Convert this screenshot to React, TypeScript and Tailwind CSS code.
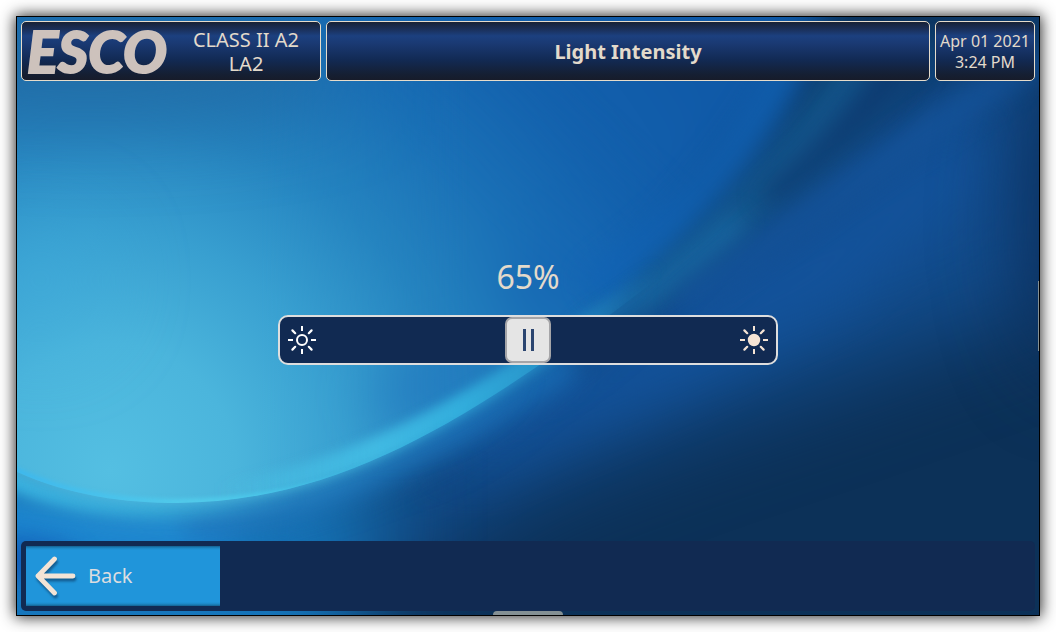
import { useState } from "react";

const panel =
  "rounded-[5px] border border-[#e6dccb] bg-[linear-gradient(180deg,#182236_0%,#1a2f58_12%,#1c407f_24%,#1a3a74_36%,#122a54_65%,#151f33_90%,#171c2a_100%)]";

const blurs = [
  { id: "blur45", amount: 45 },
  { id: "blur26", amount: 26 },
  { id: "blur12", amount: 12 },
  { id: "blur6", amount: 6 },
  { id: "blur2", amount: 2 },
];

function Wallpaper() {
  return (
    <svg
      className="absolute inset-0 -z-10 h-full w-full"
      viewBox="17 17 1022 598"
      preserveAspectRatio="none"
      aria-hidden="true"
    >
      <defs>
        {blurs.map((b) => (
          <filter
            key={b.id}
            id={b.id}
            filterUnits="userSpaceOnUse"
            x="-200"
            y="-200"
            width="1500"
            height="1100"
            colorInterpolationFilters="sRGB"
          >
            <feGaussianBlur stdDeviation={b.amount} />
          </filter>
        ))}
        <radialGradient id="upper" gradientUnits="userSpaceOnUse" cx="110" cy="470" r="700">
          <stop offset="0" stopColor="#54bfe2" />
          <stop offset="0.18" stopColor="#4bb5dc" />
          <stop offset="0.34" stopColor="#389fd0" />
          <stop offset="0.5" stopColor="#2584c0" />
          <stop offset="0.66" stopColor="#1a70b6" />
          <stop offset="0.82" stopColor="#1361ad" />
          <stop offset="1" stopColor="#105aa8" />
        </radialGradient>
        <linearGradient id="rim" gradientUnits="userSpaceOnUse" x1="17" y1="0" x2="720" y2="0">
          <stop offset="0" stopColor="#3cb8ee" />
          <stop offset="0.25" stopColor="#52cdec" />
          <stop offset="0.5" stopColor="#3cc0e8" />
          <stop offset="0.68" stopColor="#2ba0d4" />
          <stop offset="0.85" stopColor="#2080b8" stopOpacity="0.8" />
          <stop offset="1" stopColor="#1a6aa8" stopOpacity="0" />
        </linearGradient>
        <linearGradient id="rimWide" gradientUnits="userSpaceOnUse" x1="220" y1="0" x2="660" y2="0">
          <stop offset="0" stopColor="#4cc8ea" stopOpacity="0" />
          <stop offset="0.35" stopColor="#45c2e8" stopOpacity="0.7" />
          <stop offset="0.55" stopColor="#33b0de" stopOpacity="0.9" />
          <stop offset="0.75" stopColor="#2894ca" stopOpacity="0.9" />
          <stop offset="1" stopColor="#1a6fae" stopOpacity="0" />
        </linearGradient>
        <linearGradient id="underGlow" gradientUnits="userSpaceOnUse" x1="17" y1="0" x2="300" y2="0">
          <stop offset="0" stopColor="#30b0e2" />
          <stop offset="0.5" stopColor="#2ba5d6" stopOpacity="0.8" />
          <stop offset="1" stopColor="#1f86c4" stopOpacity="0" />
        </linearGradient>
        <linearGradient id="sharpFade" gradientUnits="userSpaceOnUse" x1="260" y1="0" x2="470" y2="0">
          <stop offset="0" stopColor="#ffffff" />
          <stop offset="1" stopColor="#000000" />
        </linearGradient>
        <mask id="sharpSide" maskUnits="userSpaceOnUse" x="-200" y="-200" width="1500" height="1100">
          <rect x="-200" y="-200" width="1500" height="1100" fill="url(#sharpFade)" />
        </mask>
        <linearGradient id="softFade" gradientUnits="userSpaceOnUse" x1="600" y1="330" x2="720" y2="200">
          <stop offset="0" stopColor="#ffffff" />
          <stop offset="1" stopColor="#000000" />
        </linearGradient>
        <mask id="nearSide" maskUnits="userSpaceOnUse" x="-200" y="-200" width="1500" height="1100">
          <rect x="-200" y="-200" width="1500" height="1100" fill="url(#softFade)" />
        </mask>
        <clipPath id="bowl">
          <path d="M-200 380L17 472C70 496 125 503 178 503C310 502 420 446 535 368C650 290 760 195 900 100L1039 -200H-200Z" />
        </clipPath>
        <g id="bowlFill">
          <path
            d="M-150 420L17 472C70 496 125 503 178 503C310 502 420 446 535 368C610 318 670 250 735 170C785 110 825 60 850 -150H-150Z"
            fill="url(#upper)"
          />
          <ellipse cx="90" cy="70" rx="260" ry="40" fill="#22689f" filter="url(#blur45)" />
          <ellipse cx="40" cy="280" rx="60" ry="60" fill="#40acdc" filter="url(#blur45)" opacity="0.5" />
          <ellipse cx="430" cy="385" rx="60" ry="22" fill="#2379c0" filter="url(#blur26)" transform="rotate(-25 430 385)" />
          <ellipse cx="560" cy="270" rx="60" ry="26" fill="#1666b4" filter="url(#blur26)" transform="rotate(-35 560 270)" opacity="0.8" />
        </g>
      </defs>

      <rect x="17" y="17" width="1022" height="598" fill="#0c3158" />
      <path d="M300 560L400 450L535 390L700 260L900 80L1060 0V300L860 370L680 430L520 490L430 560Z" fill="#124c8c" filter="url(#blur45)" />
      <path d="M420 475L540 385L680 290L820 215L980 110V190L840 310L660 400L500 470Z" fill="#13539c" filter="url(#blur26)" opacity="0.9" />
      <ellipse cx="1090" cy="220" rx="60" ry="150" fill="#0c3060" filter="url(#blur45)" />
      <path d="M-100 470L180 490L380 450V560L320 720H-100Z" fill="#1675ba" filter="url(#blur45)" />
      <path d="M-100 470L60 490L240 500L220 580H-100Z" fill="#1c88d4" filter="url(#blur26)" opacity="0.9" />
      <path d="M200 520C320 505 420 455 560 370" fill="none" stroke="#186bb8" strokeWidth="34" strokeLinecap="round" filter="url(#blur12)" opacity="0.8" />
      <ellipse cx="10" cy="560" rx="70" ry="22" fill="#1358b4" filter="url(#blur12)" opacity="0.8" />
      <path d="M-60 455L17 482C80 510 180 518 300 494" fill="none" stroke="url(#underGlow)" strokeWidth="18" filter="url(#blur6)" />

      <use href="#bowlFill" filter="url(#blur26)" />
      <g mask="url(#nearSide)">
        <use href="#bowlFill" filter="url(#blur6)" />
      </g>
      <g clipPath="url(#bowl)" mask="url(#sharpSide)">
        <use href="#bowlFill" />
      </g>

      <path d="M640 265C730 200 790 130 850 40H930C890 120 820 180 700 275L620 325Z" fill="#14588f" filter="url(#blur12)" opacity="0.85" />
      <path d="M760 195C815 150 850 110 885 50H935C890 110 850 145 775 205Z" fill="#0d3a70" filter="url(#blur12)" />
      <path d="M590 330C640 300 690 265 735 225" fill="none" stroke="#1b6eaa" strokeWidth="20" strokeLinecap="round" filter="url(#blur12)" opacity="0.8" />
      <path d="M690 297C790 225 880 160 1030 62" fill="none" stroke="#15549c" strokeWidth="26" strokeLinecap="round" filter="url(#blur12)" opacity="0.8" />
      <path d="M600 280C690 215 750 150 800 40" fill="none" stroke="#1163b6" strokeWidth="34" strokeLinecap="round" filter="url(#blur12)" opacity="0.7" />

      <path d="M220 494C340 474 440 424 535 362C590 326 620 306 660 276" fill="none" stroke="url(#rimWide)" strokeWidth="18" filter="url(#blur6)" mask="url(#nearSide)" opacity="0.65" />
      <g clipPath="url(#bowl)">
        <path d="M200 500C330 480 430 434 535 364C590 328 620 306 680 260" fill="none" stroke="url(#rimWide)" strokeWidth="26" filter="url(#blur6)" />
        <path d="M-40 447L17 471C70 495 125 502 178 502C300 500 370 472 450 425" fill="none" stroke="url(#rim)" strokeWidth="6" strokeLinecap="round" filter="url(#blur2)" />
      </g>
    </svg>
  );
}

function Sun({ filled = false }: { filled?: boolean }) {
  const color = filled ? "#f5e4d5" : "#ffffff";
  return (
    <svg width="28" height="28" viewBox="-14 -14 28 28" fill="none" stroke={color} strokeWidth="2" aria-hidden="true">
      <circle r={filled ? 5.2 : 5} fill={filled ? color : "none"} />
      <path d="M0 -14V-9M0 14V9M-14 0H-9M14 0H9" />
      <path d="M-9.6 -9.6L-6.8 -6.8M9.6 -9.6L6.8 -6.8M-9.6 9.6L-6.8 6.8M9.6 9.6L6.8 6.8" strokeWidth="2.2" strokeLinecap="round" />
    </svg>
  );
}

function BackArrow() {
  return (
    <svg
      className="drop-shadow-[1px_3px_1px_rgba(10,50,90,0.55)]"
      width="42"
      height="42"
      viewBox="0 0 42 42"
      fill="none"
      stroke="#f3e4d6"
      strokeWidth="4.8"
      strokeLinecap="round"
      strokeLinejoin="round"
      aria-hidden="true"
    >
      <path d="M39 21H4M20.5 4L4 21L20.5 38" />
    </svg>
  );
}

export default function App() {
  const [level, setLevel] = useState(65);

  return (
    <div className="flex min-h-screen bg-white p-4 font-['Noto_Sans','Open_Sans',sans-serif] text-[#e3dacb]">
      <div className="relative isolate flex grow flex-col border border-black p-1 shadow-[0_0_14px_1px_rgba(0,0,0,0.85)]">
        <Wallpaper />

        <header className="flex h-[60px] gap-[5px]">
          <div className={`${panel} flex w-[300px] items-center`}>
            <div className="flex w-[150px] justify-center font-['Lato',sans-serif] text-[58px] leading-[58px] font-black text-[#cdc2bc] italic [-webkit-text-stroke:2px_#cdc2bc] [stroke-linejoin:round]">
              ESCO
            </div>
            <p className="grow pt-0.5 text-center text-xl leading-6">
              CLASS II A2
              <br />
              LA2
            </p>
          </div>
          <div className={`${panel} flex grow items-center justify-center pt-0.5`}>
            <h1 className="text-xl font-bold">Light Intensity</h1>
          </div>
          <p className={`${panel} flex w-[100px] flex-col justify-center pt-0.5 text-center text-base leading-[21px] whitespace-nowrap`}>
            <span>Apr 01 2021</span>
            <span>3:24 PM</span>
          </p>
        </header>

        <main className="flex grow flex-col items-center justify-center gap-[14px] pb-1">
          <label htmlFor="intensity" aria-label="Light intensity" className="text-[32px] leading-[48px]">
            {level}%
          </label>
          <div className="relative w-[500px] max-w-full rounded-[10px] border-2 border-[#dedede] bg-[#112a52]">
            <input
              id="intensity"
              type="range"
              min={30}
              max={100}
              value={level}
              onChange={(e) => setLevel(Number(e.target.value))}
              className="block h-[46px] w-full cursor-pointer appearance-none bg-transparent [&::-webkit-slider-thumb]:h-[46px] [&::-webkit-slider-thumb]:w-[46px] [&::-webkit-slider-thumb]:appearance-none [&::-webkit-slider-thumb]:rounded-[7px] [&::-webkit-slider-thumb]:border-2 [&::-webkit-slider-thumb]:border-[#a5a5a8] [&::-webkit-slider-thumb]:bg-[#e5e5e5] [&::-webkit-slider-thumb]:bg-[linear-gradient(#2b4570,#2b4570),linear-gradient(#2b4570,#2b4570)] [&::-webkit-slider-thumb]:[background-position:16px_10px,24px_10px] [&::-webkit-slider-thumb]:[background-repeat:no-repeat] [&::-webkit-slider-thumb]:[background-size:3px_22px]"
            />
            <div className="pointer-events-none absolute inset-0 flex items-center justify-between px-2">
              <Sun />
              <Sun filled />
            </div>
          </div>
        </main>

        <footer className="rounded-[5px] bg-[#112a52] p-[5px]">
          <button
            type="button"
            className="flex h-[60px] w-[194px] items-center gap-3 bg-[linear-gradient(180deg,#14608f_0,#1c87c4_2px,#2095da_4px,#2095da_56px,#1c87c4_58px,#14608f_60px)] pl-2 text-xl text-[#dcdde0]"
          >
            <BackArrow />
            Back
          </button>
        </footer>

        <div className="absolute bottom-0 left-1/2 h-1 w-[70px] -translate-x-1/2 rounded-t-sm bg-[#849094]" />
        <div className="absolute top-1/2 right-0 h-[70px] w-px -translate-y-1/2 bg-[#849094]" />
      </div>
    </div>
  );
}
